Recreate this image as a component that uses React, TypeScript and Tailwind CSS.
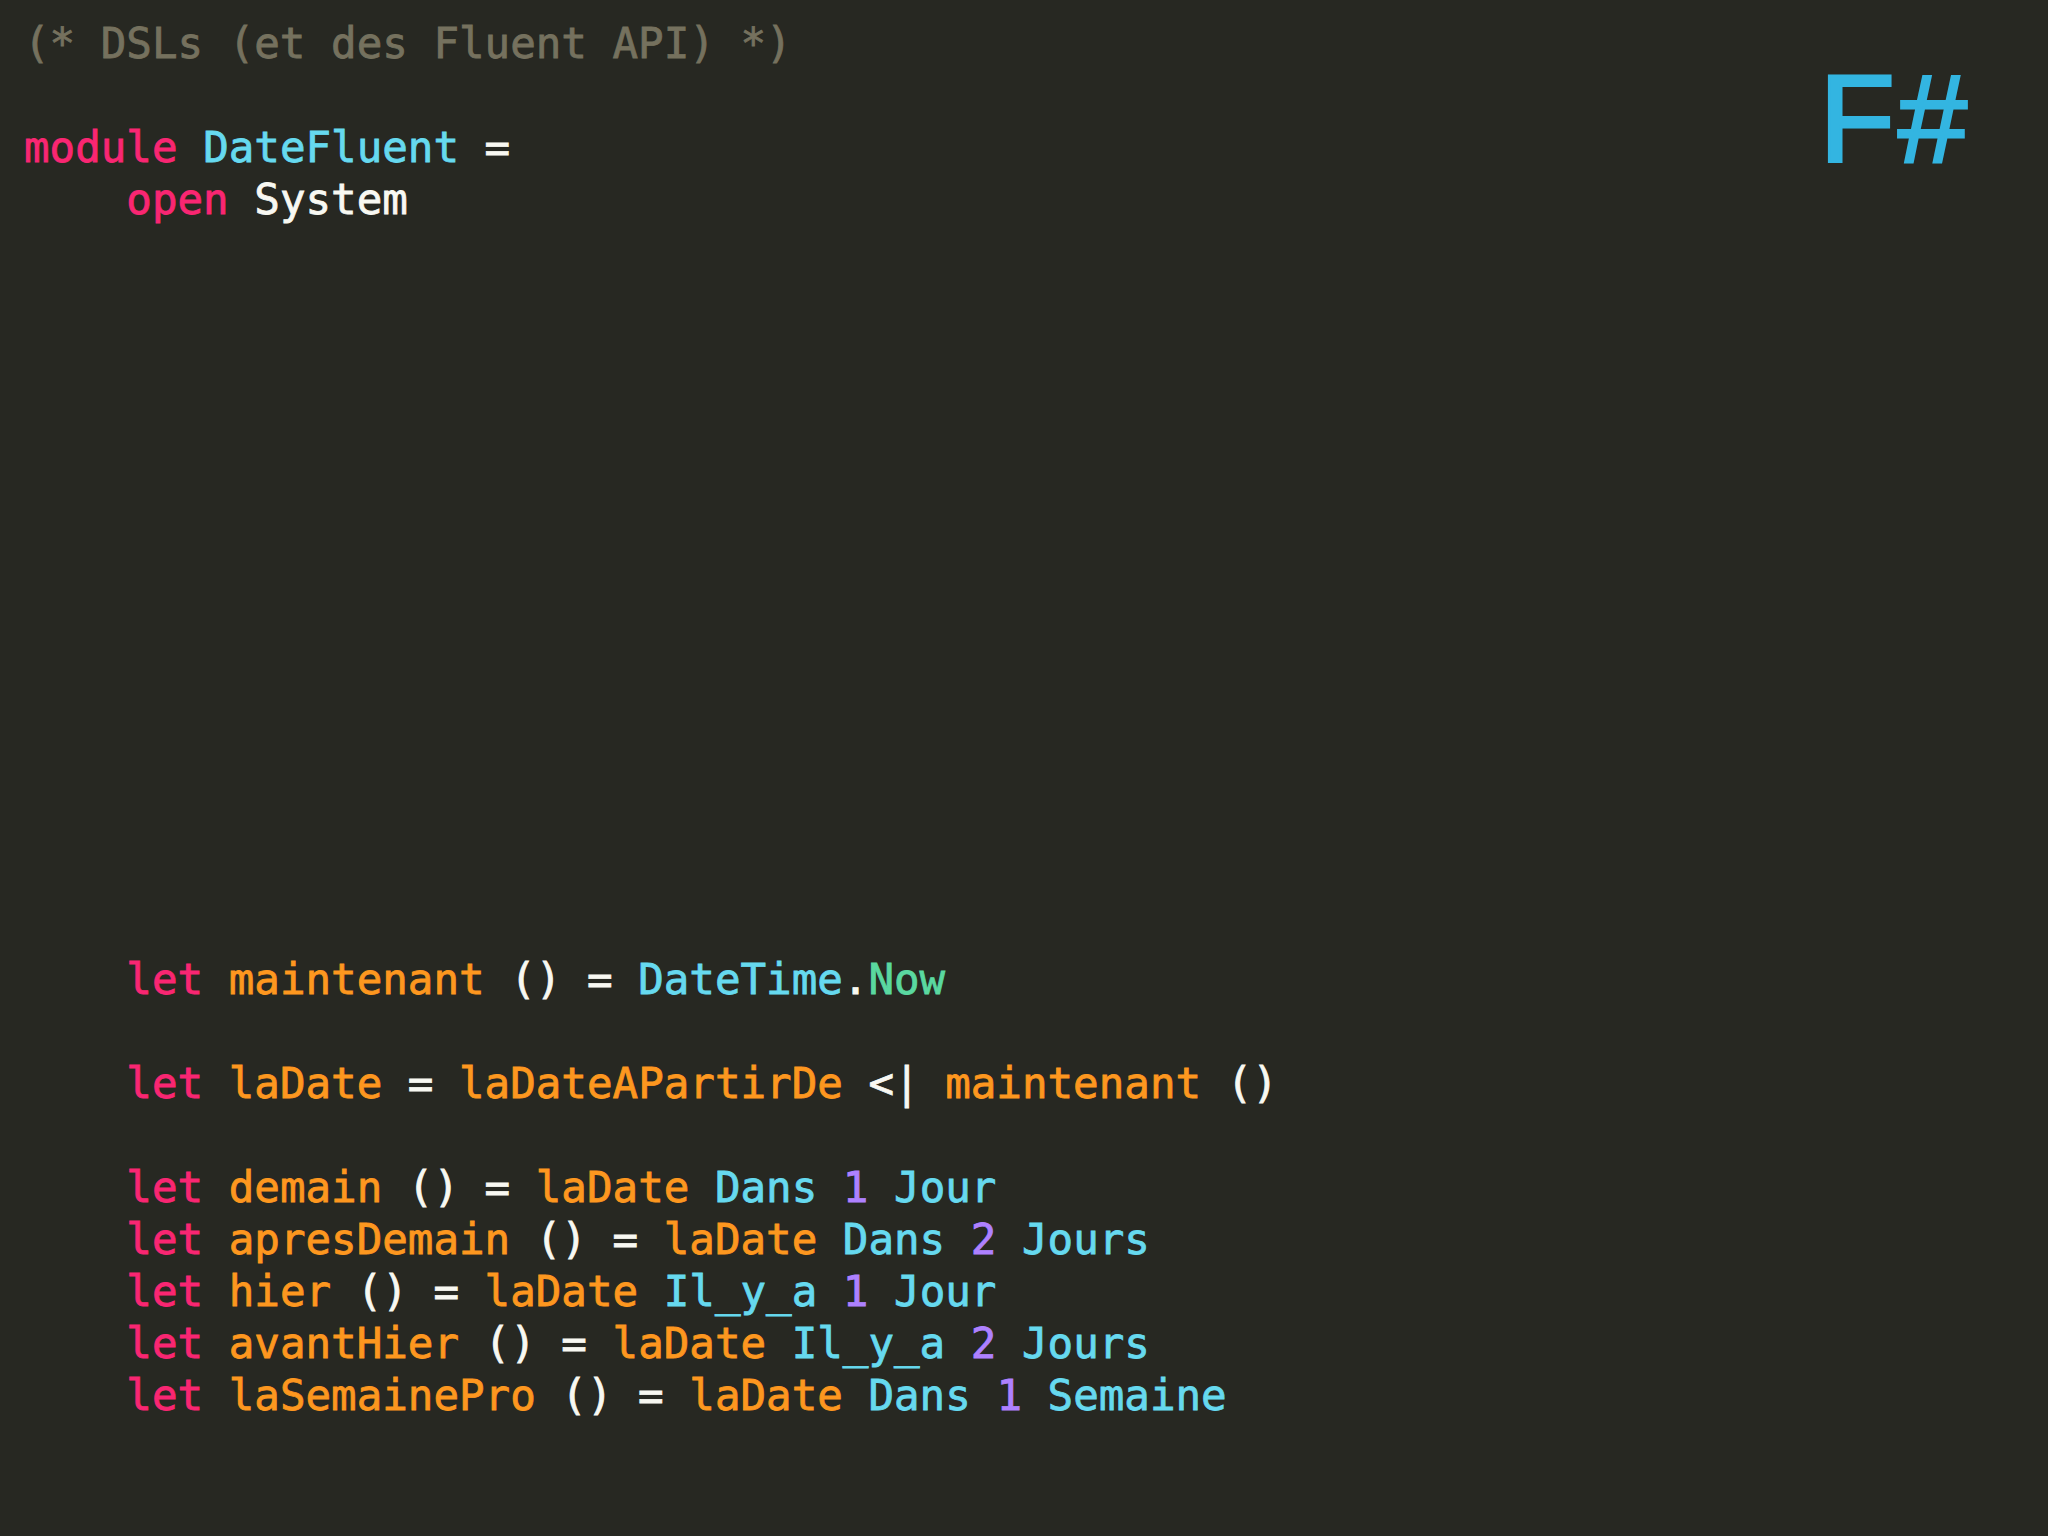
import React from "react";

type Tok = [string, string];

const P = "text-[#f92672]";
const O = "text-[#fd971f]";
const C = "text-[#66d9ef]";
const W = "text-[#f8f8f2]";
const V = "text-[#ae81ff]";
const G = "text-[#5ad8a0]";
const M = "text-[#75715e]";

const lines: Tok[][] = [
  [[M, "(* DSLs (et des Fluent API) *)"]],
  [],
  [[P, "module"], [W, " "], [C, "DateFluent"], [W, " ="]],
  [[W, "    "], [P, "open"], [W, " System"]],
  [], [], [], [], [], [], [], [], [], [], [], [], [], [],
  [[W, "    "], [P, "let"], [W, " "], [O, "maintenant"], [W, " () = "], [C, "DateTime"], [W, "."], [G, "Now"]],
  [],
  [[W, "    "], [P, "let"], [W, " "], [O, "laDate"], [W, " = "], [O, "laDateAPartirDe"], [W, " <| "], [O, "maintenant"], [W, " ()"]],
  [],
  [[W, "    "], [P, "let"], [W, " "], [O, "demain"], [W, " () = "], [O, "laDate"], [W, " "], [C, "Dans"], [W, " "], [V, "1"], [W, " "], [C, "Jour"]],
  [[W, "    "], [P, "let"], [W, " "], [O, "apresDemain"], [W, " () = "], [O, "laDate"], [W, " "], [C, "Dans"], [W, " "], [V, "2"], [W, " "], [C, "Jours"]],
  [[W, "    "], [P, "let"], [W, " "], [O, "hier"], [W, " () = "], [O, "laDate"], [W, " "], [C, "Il_y_a"], [W, " "], [V, "1"], [W, " "], [C, "Jour"]],
  [[W, "    "], [P, "let"], [W, " "], [O, "avantHier"], [W, " () = "], [O, "laDate"], [W, " "], [C, "Il_y_a"], [W, " "], [V, "2"], [W, " "], [C, "Jours"]],
  [[W, "    "], [P, "let"], [W, " "], [O, "laSemainePro"], [W, " () = "], [O, "laDate"], [W, " "], [C, "Dans"], [W, " "], [V, "1"], [W, " "], [C, "Semaine"]],
];

export default function App() {
  return (
    <div className="w-[2048px] h-[1536px] bg-[#272822] flex justify-between overflow-hidden">
      <div className="pt-[18px] pl-[24px] font-['DejaVu_Sans_Mono',monospace] text-[42.5px] leading-[52px] [-webkit-text-stroke-width:0.8px]">
        {lines.map((line, i) => (
          <div key={i} className="h-[52px] whitespace-pre">
            {line.map((t, j) => (
              <span key={j} className={t[0]}>
                {t[1]}
              </span>
            ))}
          </div>
        ))}
      </div>
      <div className="mt-[57px] mr-[81px] h-fit flex gap-[3px] font-['Liberation_Sans',Arial,sans-serif] text-[124px] leading-none text-[#33b5e1] [-webkit-text-stroke:3px_#33b5e1]">
        <span>F</span>
        <span>#</span>
      </div>
    </div>
  );
}
